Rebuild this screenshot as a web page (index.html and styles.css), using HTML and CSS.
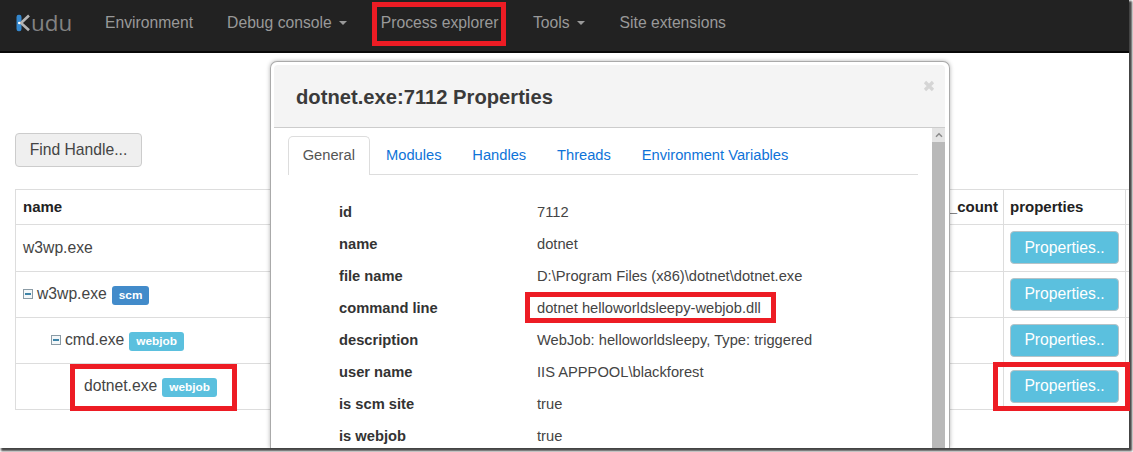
FILE: index.html
```html
<!DOCTYPE html>
<html lang="en">
<head>
<meta charset="utf-8">
<title>Kudu - Process explorer</title>
<link rel="stylesheet" href="styles.css">
</head>
<body>
<div class="window">
  <nav class="navbar">
    <div class="brand">
      <svg class="brand-k" width="15" height="18" viewBox="0 0 15 18">
        <rect x="0.5" y="0.8" width="5" height="16.4" rx="2.2" fill="#3487cd"/>
        <path d="M13 1.5 5 9 13 16.3" fill="none" stroke="#b4b4b4" stroke-width="2.6"/>
        <circle cx="3.2" cy="9" r="1.2" fill="#fff"/>
      </svg><span class="brand-text">udu</span>
    </div>
    <a class="nav-item nav-env">Environment</a>
    <a class="nav-item nav-debug">Debug console<i class="caret"></i></a>
    <a class="nav-item nav-process">Process explorer<i class="mark mark-process"></i></a>
    <a class="nav-item nav-tools">Tools<i class="caret"></i></a>
    <a class="nav-item">Site extensions</a>
  </nav>

  <main class="content">
    <button class="btn-find">Find Handle...</button>
    <div class="table">
      <div class="row head"><div class="c-name">name</div><div class="c-count">_count</div><div class="c-props">properties</div><div class="c-end"></div></div>
      <div class="row"><div class="c-name">w3wp.exe</div><div class="c-count"></div><div class="c-props"><button class="btn-info">Properties..</button></div><div class="c-end"></div></div>
      <div class="row"><div class="c-name"><i class="fold"></i>w3wp.exe<span class="label scm">scm</span></div><div class="c-count"></div><div class="c-props"><button class="btn-info">Properties..</button></div><div class="c-end"></div></div>
      <div class="row"><div class="c-name lvl1"><i class="fold"></i>cmd.exe<span class="label">webjob</span></div><div class="c-count"></div><div class="c-props"><button class="btn-info">Properties..</button></div><div class="c-end"></div></div>
      <div class="row"><div class="c-name lvl2">dotnet.exe<span class="label">webjob</span><i class="mark mark-name"></i></div><div class="c-count"></div><div class="c-props"><button class="btn-info">Properties..</button><i class="mark mark-props"></i></div><div class="c-end"></div></div>
    </div>
  </main>

  <section class="modal">
    <header class="modal-head">
      <h3>dotnet.exe:7112 Properties</h3>
      <svg class="close" width="12" height="12" viewBox="0 0 12 12"><path d="M2 2 10 10M10 2 2 10" stroke="#d5d5d5" stroke-width="3.2"/></svg>
    </header>
    <div class="modal-body">
      <div class="pane">
        <div class="tabs">
          <a class="tab active">General</a><a class="tab">Modules</a><a class="tab">Handles</a><a class="tab">Threads</a><a class="tab">Environment Variables</a>
        </div>
        <dl class="details">
          <dt>id</dt><dd>7112</dd>
          <dt>name</dt><dd>dotnet</dd>
          <dt>file name</dt><dd>D:\Program Files (x86)\dotnet\dotnet.exe</dd>
          <dt>command line</dt><dd>dotnet helloworldsleepy-webjob.dll<i class="mark mark-command"></i></dd>
          <dt>description</dt><dd>WebJob: helloworldsleepy, Type: triggered</dd>
          <dt>user name</dt><dd>IIS APPPOOL\blackforest</dd>
          <dt>is scm site</dt><dd>true</dd>
          <dt>is webjob</dt><dd>true</dd>
        </dl>
      </div>
      <div class="scrollbar">
        <div class="scroll-up"><svg width="8" height="6" viewBox="0 0 8 6"><path d="M1 4.7 4 1.7 7 4.7" fill="none" stroke="#8a8a8a" stroke-width="1.5"/></svg></div>
        <div class="scroll-thumb"></div>
      </div>
    </div>
  </section>
</div>
</body>
</html>
```

FILE: styles.css
```css
* { box-sizing: border-box; }
body {
  margin: 0;
  width: 1133px;
  height: 452px;
  overflow: hidden;
  background: #fff;
  font-family: "Liberation Sans", Arial, sans-serif;
  font-size: 15.7px;
  color: #444;
}
.window {
  position: relative;
  width: 1129px;
  height: 448px;
  background: #fff;
  box-shadow: 2px 2px 2px 1px #444;
  clip-path: inset(0 -4px -4px 0);
}
.window > * { white-space: nowrap; }

/* Navigation */
.navbar {
  display: flex;
  height: 53px;
  padding: 0 16px 6px;
  align-items: center;
  background: #222;
  border-bottom: 2px solid #080808;
  color: #999;
}
.brand { display: flex; align-items: center; width: 89px; height: 26px; }
.brand-text { font-family: "Open Sans", sans-serif; font-size: 22.4px; line-height: 26px; margin-top: 1px; color: #838383; }
.nav-item { position: relative; display: flex; align-items: center; margin-right: 34px; line-height: 20px; }
.nav-process { margin-right: 34.5px; }
.nav-tools { margin-right: 35px; }
.caret {
  margin-left: 7px;
  border: 4px solid transparent;
  border-top-color: #999;
  border-bottom: 0;
}
.mark { position: absolute; border: 5px solid #ed1c24; }
.nav-process .mark-process { left: -9px; top: -11px; width: 134px; height: 44px; }

/* Process table */
.content { padding: 80px 0 0 15px; }
.btn-find {
  display: block;
  width: 127px;
  height: 34px;
  padding: 0;
  font: inherit;
  color: #444;
  background: #efefef;
  border: 1px solid #ccc;
  border-radius: 4px;
}
.table { margin-top: 22px; border-top: 1px solid #ddd; border-left: 1px solid #ddd; }
.row { display: flex; height: 46px; border-bottom: 1px solid #ddd; }
.row.head { height: 35px; font-weight: bold; font-size: 15px; color: #222; }
.row.head + .row { height: 47px; }
.row > div { position: relative; display: flex; align-items: center; border-right: 1px solid #ddd; padding-bottom: 1px; }
.row .c-name { width: 900px; padding-left: 7px; border-right: 0; }
.row .c-count { width: 88px; justify-content: flex-end; padding-right: 5px; }
.row .c-props { width: 122px; padding-left: 6px; }
.row .c-end { flex: 1; border-right: 0; }
.row .lvl1 { padding-left: 35px; }
.row .lvl2 { padding-left: 68px; }
.fold {
  width: 10px;
  height: 10px;
  margin-right: 4px;
  border: 1px solid #8b9ba5;
  background: linear-gradient(#3d84a8, #3d84a8) center / 6px 2px no-repeat #f3f7f9;
}
.label {
  height: 19px;
  margin: 3px 0 0 5px;
  padding: 0 7px;
  border-radius: 3px;
  background: #5bc0de;
  color: #fff;
  font-size: 11.8px;
  font-weight: bold;
  line-height: 19px;
}
.label.scm { background: #428bca; }
.btn-info {
  width: 109px;
  height: 33px;
  padding: 0;
  font: inherit;
  color: #fff;
  background: #5bc0de;
  border: 1px solid #b5c3c8;
  border-radius: 4px;
}
.mark-name { left: 54px; top: 0; width: 167px; height: 47px; }
.mark-props { left: -11px; top: -2px; width: 137px; height: 49px; }

/* Properties dialog */
.modal {
  position: absolute;
  left: 270px;
  top: 61px;
  width: 680px;
  height: 387px;
  padding: 3px 4px 0 3px;
  border: 1px solid #aaa;
  border-bottom: 0;
  border-radius: 7px 7px 0 0;
  background: #fff;
  box-shadow: 0 0 4px rgba(0, 0, 0, .3);
  clip-path: inset(-6px -6px 0 -6px);
}
.modal-head {
  display: flex;
  justify-content: space-between;
  height: 63px;
  padding: 15px 10px 0 22px;
  background: #f4f4f4;
  border-bottom: 1px solid #ccc;
  border-radius: 4px 4px 0 0;
}
.modal-head h3 { margin: 0; font-size: 20.2px; line-height: 34px; color: #3a3a3a; }
.modal-body { display: flex; height: 320px; }
.pane { flex: 1; padding: 8px 14px 0 14px; }
.scrollbar { width: 13px; background: #b9b9b9; }
.scroll-up { display: flex; align-items: center; justify-content: center; height: 14px; background: #e4e4e4; }
.tabs { display: flex; gap: 2px; height: 39px; border-bottom: 1px solid #ddd; font-size: 14.7px; color: #0e73d8; }
.tab { height: 39px; padding: 0 14.4px; line-height: 38px; }
.tab.active { padding: 0 13.7px; border: 1px solid #ddd; border-bottom: 0; border-radius: 5px 5px 0 0; background: #fff; color: #555; line-height: 36px; }
.details {
  display: grid;
  grid-template-columns: 198px 1fr;
  grid-auto-rows: 32px;
  align-items: center;
  margin: 21px 0 0 51px;
  font-size: 14.7px;
}
.details dt { font-weight: bold; color: #333; }
.details dd { position: relative; margin: 0; }
.mark-command { left: -12px; top: -8px; width: 251px; height: 31px; }
```
